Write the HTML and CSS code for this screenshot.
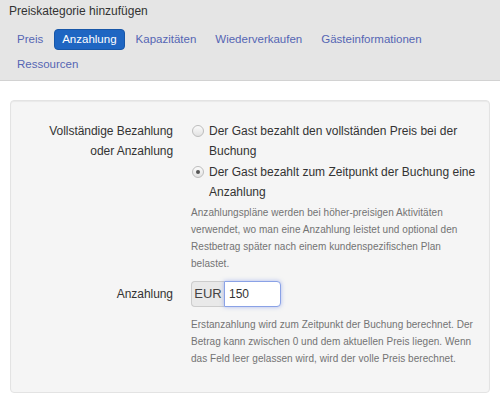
FILE: index.html
```html
<!DOCTYPE html>
<html>
<head>
<meta charset="utf-8">
<link rel="stylesheet" href="styles.css">
</head>
<body>
<div class="header">
  <div class="title">Preiskategorie hinzufügen</div>
  <ul class="tabs">
    <li><a>Preis</a></li>
    <li class="active"><a>Anzahlung</a></li>
    <li><a>Kapazitäten</a></li>
    <li><a>Wiederverkaufen</a></li>
    <li><a>Gästeinformationen</a></li>
    <li><a>Ressourcen</a></li>
  </ul>
</div>
<div class="content">
  <div class="panel">
    <div class="row">
      <div class="label">Vollständige Bezahlung<br>oder Anzahlung</div>
      <div class="field">
        <label class="radio"><span class="dot"></span><span>Der Gast bezahlt den vollständen Preis bei der Buchung</span></label>
        <label class="radio"><span class="dot checked"></span><span>Der Gast bezahlt zum Zeitpunkt der Buchung eine Anzahlung</span></label>
        <p class="help">Anzahlungspläne werden bei höher-preisigen Aktivitäten verwendet, wo man eine Anzahlung leistet und optional den Restbetrag später nach einem kundenspezifischen Plan belastet.</p>
      </div>
    </div>
    <div class="row row2">
      <div class="label label-mid">Anzahlung</div>
      <div class="field">
        <div class="input-group"><span class="addon">EUR</span><span class="input">150</span></div>
        <p class="help help2">Erstanzahlung wird zum Zeitpunkt der Buchung berechnet. Der Betrag kann zwischen 0 und dem aktuellen Preis liegen. Wenn das Feld leer gelassen wird, wird der volle Preis berechnet.</p>
      </div>
    </div>
  </div>
</div>
</body>
</html>
```
FILE: styles.css
```css
html, body {
  margin: 0;
  padding: 0;
  background: #fff;
  font-family: "Liberation Sans", Arial, sans-serif;
  font-size: 12px;
  color: #333;
}
.header {
  background: #e5e5e5;
  border-bottom: 1px solid #d2d2d2;
  height: 81px;
  box-sizing: border-box;
}
.title {
  padding: 3px 0 0 9px;
  line-height: 16px;
  font-size: 12px;
  color: #333;
}
.tabs {
  list-style: none;
  margin: 10px 0 0 9px;
  padding: 0;
  display: flex;
  flex-wrap: wrap;
  row-gap: 4px;
  column-gap: 3px;
  width: 440px;
}
.tabs li a {
  display: block;
  padding: 2px 7px;
  line-height: 15px;
  font-size: 11.5px;
  color: #5566b4;
  border-radius: 4px;
  border: 1px solid transparent;
}
.tabs li.active a {
  background: #1f66c2;
  border-color: #1857a8;
  color: #fff;
}
.content {
  padding: 19px 10px 0 10px;
}
.panel {
  background: #f5f5f5;
  border: 1px solid #e3e3e3;
  border-radius: 4px;
  box-shadow: inset 0 1px 1px rgba(0,0,0,0.05);
  height: 293px;
  box-sizing: border-box;
  padding: 19px 0 0 0;
}
.row {
  display: flex;
}
.label {
  width: 162px;
  text-align: right;
  line-height: 20px;
  padding-top: 1px;
  flex: none;
  letter-spacing: -0.05px;
}
.field {
  margin-left: 18px;
  width: 288px;
}
.radio {
  display: flex;
  align-items: flex-start;
  line-height: 20px;
  padding-top: 1px;
  font-size: 12px;
}
.dot {
  width: 12px;
  height: 12px;
  border-radius: 50%;
  border: 1px solid #bdbdbd;
  background: linear-gradient(#fbfbfb, #e2e2e2);
  flex: none;
  margin: 4px 5px 0 1px;
  box-sizing: border-box;
  position: relative;
}
.dot.checked::after {
  content: "";
  position: absolute;
  left: 3px;
  top: 3px;
  width: 4px;
  height: 4px;
  border-radius: 50%;
  background: #555;
}
.help {
  margin: 2px 0 0 0;
  font-size: 10px;
  line-height: 17px;
  color: #737373;
  letter-spacing: 0.05px;
  width: 283px;
}
.row2 {
  margin-top: 9px;
}
.label-mid {
  padding-top: 3px;
}
.input-group {
  display: flex;
  height: 26px;
}
.addon {
  background: #e9e9e9;
  border: 1px solid #ccc;
  border-right: 0;
  border-radius: 4px 0 0 4px;
  width: 33px;
  box-sizing: border-box;
  text-align: center;
  line-height: 24px;
  font-size: 13px;
  color: #444;
}
.input {
  background: #fff;
  border: 1px solid #8aa2e6;
  border-radius: 0 4px 4px 0;
  width: 57px;
  box-sizing: border-box;
  line-height: 24px;
  padding-left: 4px;
  font-size: 12px;
  color: #333;
  box-shadow: 0 0 4px rgba(102, 130, 233, 0.5);
}
.help2 {
  margin-top: 9px;
}
```
